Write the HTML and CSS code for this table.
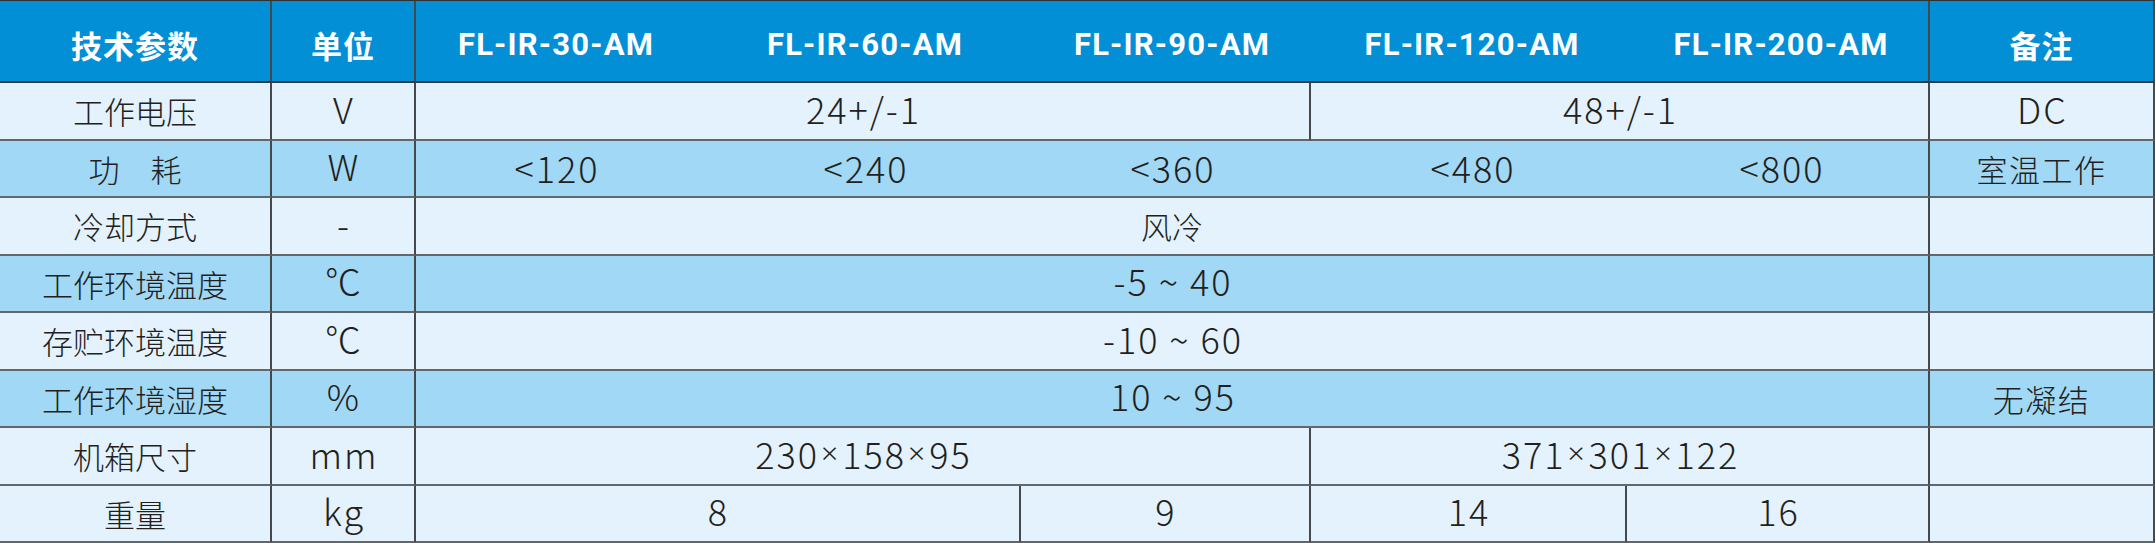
FILE: index.html
```html
<!DOCTYPE html>
<html lang="zh-CN">
<head>
<meta charset="utf-8">
<title>技术参数</title>
<link rel="stylesheet" href="styles.css">
</head>
<body>
<div class="spec">
  <div class="c hd cjkb">技术参数</div>
  <div class="c hd cjkb">单位</div>
  <div class="c hd s4 sub">
    <div class="model">FL-IR-30-AM</div>
    <div class="model">FL-IR-60-AM</div>
    <div class="model">FL-IR-90-AM</div>
    <div class="model">FL-IR-120-AM</div>
    <div class="model">FL-IR-200-AM</div>
  </div>
  <div class="c hd cjkb">备注</div>

  <div class="c lt">工作电压</div>
  <div class="c lt n">V</div>
  <div class="c lt n s2">24+/-1</div>
  <div class="c lt n s2">48+/-1</div>
  <div class="c lt n">DC</div>

  <div class="c dk">功　耗</div>
  <div class="c dk n">W</div>
  <div class="c dk s4 sub">
    <div class="n v">&lt;120</div>
    <div class="n v">&lt;240</div>
    <div class="n v">&lt;360</div>
    <div class="n v">&lt;480</div>
    <div class="n v">&lt;800</div>
  </div>
  <div class="c dk rm">室温工作</div>

  <div class="c lt">冷却方式</div>
  <div class="c lt n">-</div>
  <div class="c lt s4">风冷</div>
  <div class="c lt"></div>

  <div class="c dk">工作环境温度</div>
  <div class="c dk n">℃</div>
  <div class="c dk n s4">-5 ~ 40</div>
  <div class="c dk"></div>

  <div class="c lt">存贮环境温度</div>
  <div class="c lt n">℃</div>
  <div class="c lt n s4">-10 ~ 60</div>
  <div class="c lt"></div>

  <div class="c dk">工作环境湿度</div>
  <div class="c dk n">%</div>
  <div class="c dk n s4">10 ~ 95</div>
  <div class="c dk rm">无凝结</div>

  <div class="c lt">机箱尺寸</div>
  <div class="c lt n">mm</div>
  <div class="c lt n s2">230<span class="x">×</span>158<span class="x">×</span>95</div>
  <div class="c lt n s2">371<span class="x">×</span>301<span class="x">×</span>122</div>
  <div class="c lt"></div>

  <div class="c lt">重量</div>
  <div class="c lt n">kg</div>
  <div class="c lt n">8</div>
  <div class="c lt n">9</div>
  <div class="c lt n">14</div>
  <div class="c lt n">16</div>
  <div class="c lt"></div>
</div>
</body>
</html>
```

FILE: styles.css
```css
html, body {
  margin: 0;
  padding: 0;
  background: #ffffff;
}

.spec {
  display: grid;
  grid-template-columns: 272px 144px 605px 290px 316px 303px 225px;
  grid-template-rows: 82px repeat(8, 57.5px);
  width: 2155px;
  box-sizing: border-box;
  border-top: 1px solid #2f3336;
}

.c {
  display: flex;
  align-items: center;
  justify-content: center;
  box-sizing: border-box;
  border-right: 2px solid #46494b;
  border-bottom: 2px solid #62676b;
  font-family: "Noto Sans CJK SC", "Noto Sans", sans-serif;
  font-size: 31px;
  font-weight: 300;
  color: #231f20;
  white-space: nowrap;
}

.lt { background: #e3f2fc; }
.dk { background: #a1d8f5; }

.hd {
  background: #028fd6;
  color: #ffffff;
  border-bottom-color: #2d3a44;
  padding-top: 6px;
}

.cjkb {
  font-weight: 700;
  letter-spacing: 1px;
}

.s2 { grid-column: span 2; }
.s4 { grid-column: span 4; }

.sub {
  display: grid;
  grid-template-columns: 280px 338px 276px 324px 1fr;
  justify-items: center;
  align-items: center;
}

.model {
  font-family: Roboto, "Liberation Sans", sans-serif;
  font-weight: 700;
  font-size: 31px;
  letter-spacing: 1.2px;
}

.n {
  font-size: 36px;
  letter-spacing: 2px;
  padding-left: 2px;
  padding-bottom: 6px;
}

.v {
  padding-bottom: 6px;
}

.x {
  font-family: "Noto Sans", sans-serif;
  font-weight: 300;
  font-size: 30px;
  padding: 0 2px;
}

.rm {
  letter-spacing: 1.5px;
}
```
